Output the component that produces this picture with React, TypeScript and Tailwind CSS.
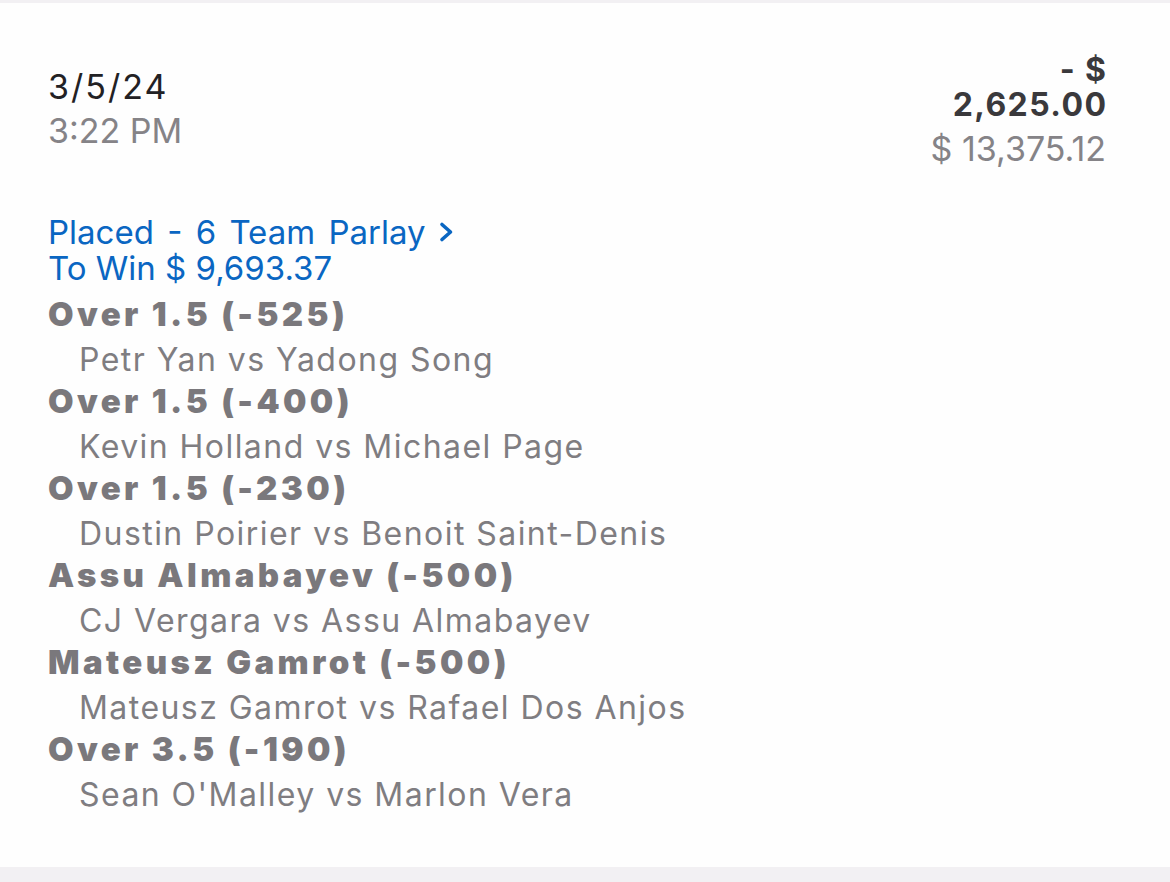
import React from "react";

type Leg = { pick: string; matchup: string };

const legs: Leg[] = [
  { pick: "Over 1.5 (-525)", matchup: "Petr Yan vs Yadong Song" },
  { pick: "Over 1.5 (-400)", matchup: "Kevin Holland vs Michael Page" },
  { pick: "Over 1.5 (-230)", matchup: "Dustin Poirier vs Benoit Saint-Denis" },
  { pick: "Assu Almabayev (-500)", matchup: "CJ Vergara vs Assu Almabayev" },
  { pick: "Mateusz Gamrot (-500)", matchup: "Mateusz Gamrot vs Rafael Dos Anjos" },
  { pick: "Over 3.5 (-190)", matchup: "Sean O'Malley vs Marlon Vera" },
];

const ChevronRight = () => (
  <svg width="18" height="22" viewBox="0 0 18 22" fill="none" className="ml-[12px] inline-block">
    <path d="M4 3.5l8.5 7.5-8.5 7.5" stroke="currentColor" strokeWidth="3.6" strokeLinecap="round" strokeLinejoin="round" />
  </svg>
);

const App = () => {
  return (
    <div className="w-[1170px] h-[882px] flex flex-col bg-[#f2f0f3] font-['Inter',sans-serif]">
      <div className="h-[3px]" />
      <main className="flex-1 bg-[#fefefe] px-[48px] pt-[62px]">
        <div className="flex justify-between">
          <div className="flex flex-col">
            <span className="text-[34px] leading-[44px] tracking-[2px] text-[#222124]">3/5/24</span>
            <span className="text-[34px] leading-[44px] text-[#858387]">3:22 PM</span>
          </div>
          <div className="flex flex-col items-end -mt-[13px] mr-[16px]">
            <span className="text-[32px] leading-[35px] font-bold tracking-[1.4px] -mr-[1.4px] text-[#3a393c]">- $</span>
            <span className="text-[32px] leading-[35px] font-bold tracking-[1.4px] -mr-[1.4px] text-[#3a393c]">2,625.00</span>
            <span className="mt-[4px] text-[34px] leading-[46px] text-[#858387]">$ 13,375.12</span>
          </div>
        </div>

        <div className="mt-[42px] flex flex-col">
          <a className="flex items-center text-[33px] leading-[36px] [word-spacing:4px] text-[#0a66c2]">
            Placed - 6 Team Parlay
            <ChevronRight />
          </a>
          <span className="text-[33px] leading-[36px] text-[#0a66c2]">To Win $ 9,693.37</span>
          <div className="mt-[7px] flex flex-col">
            {legs.map((leg, index) => (
              <div key={index} className="flex flex-col">
                <span className="text-[33px] leading-[43.5px] font-black tracking-[3.4px] text-[#7a787c]">{leg.pick}</span>
                <span className="mt-[1.5px] -mb-[1.5px] pl-[31px] text-[32px] leading-[43.5px] tracking-[1.45px] text-[#7f7d81]">
                  {leg.matchup}
                </span>
              </div>
            ))}
          </div>
        </div>
      </main>
      <div className="h-[15px]" />
    </div>
  );
};

export default App;
